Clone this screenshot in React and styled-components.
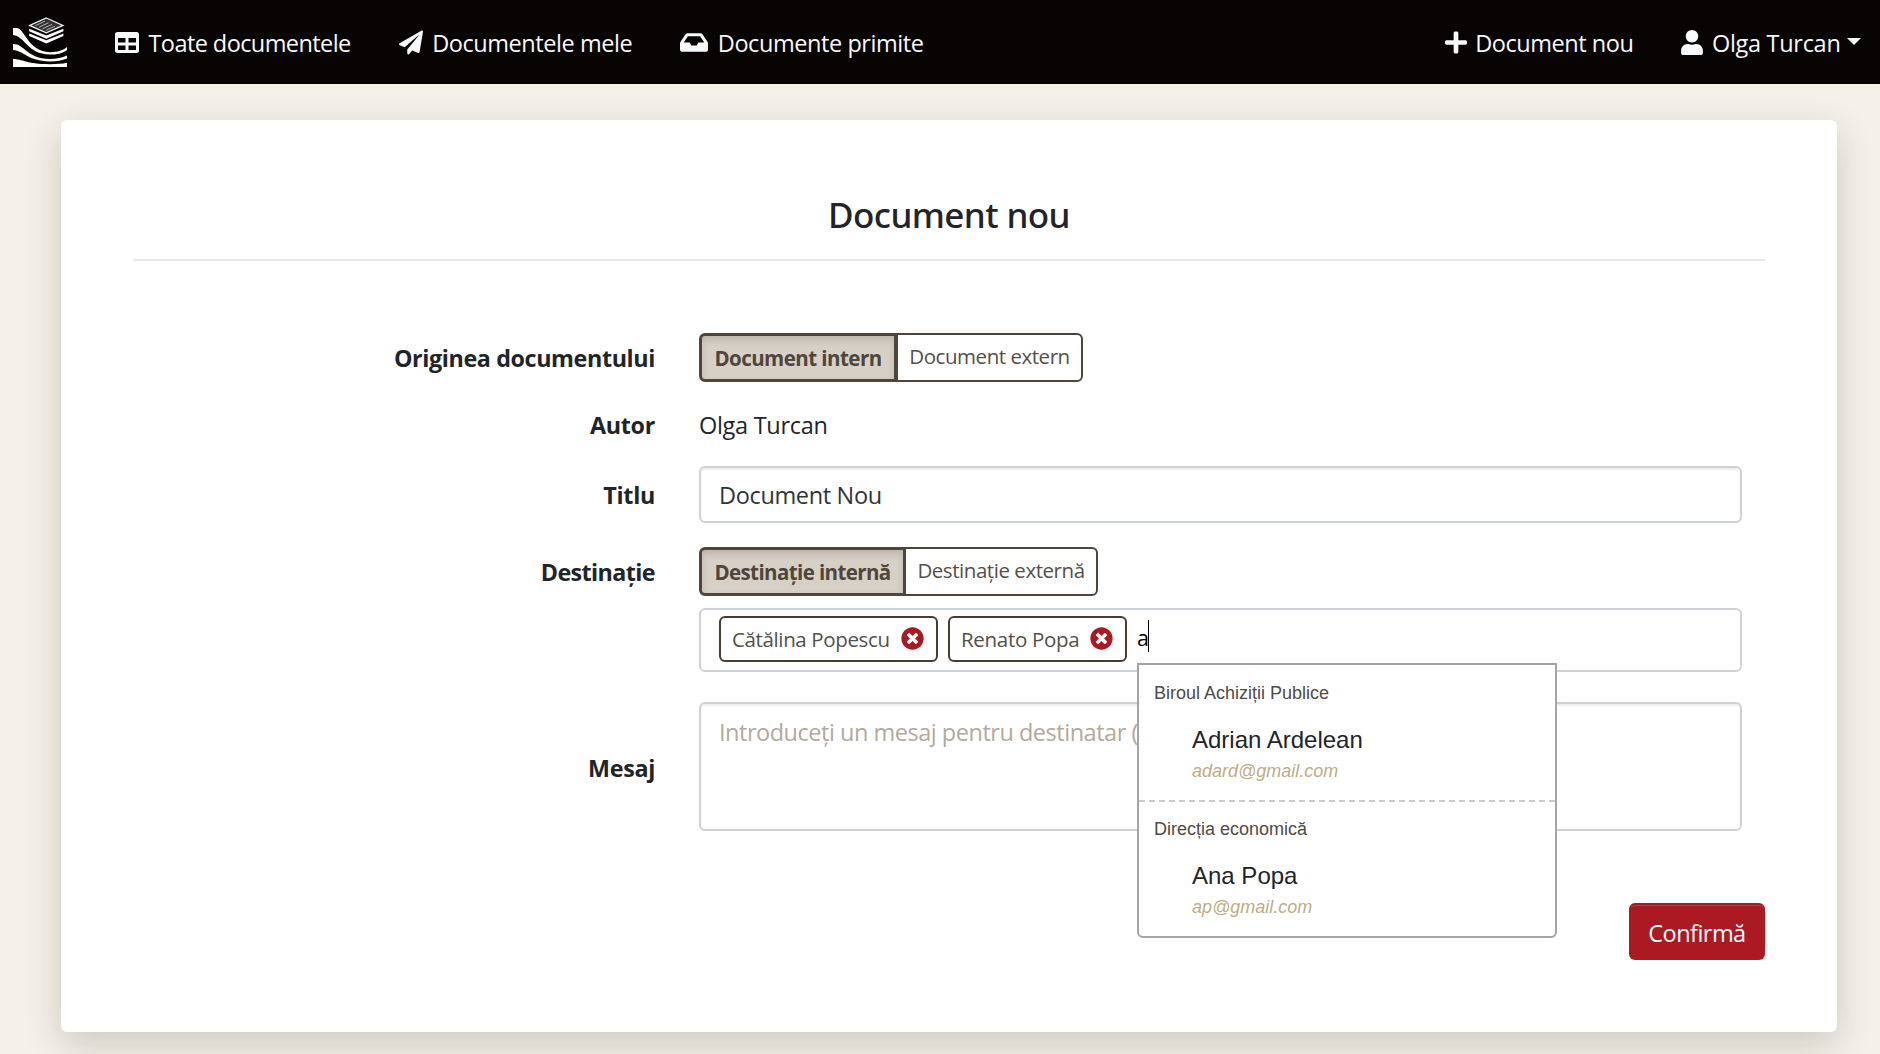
import React from 'react';
import styled, { createGlobalStyle } from 'styled-components';
import { FaTable, FaPaperPlane, FaInbox, FaPlus, FaUser, FaTimesCircle } from 'react-icons/fa';

const GlobalStyle = createGlobalStyle`
  *, *::before, *::after { box-sizing: border-box; }
  html, body { height: 100%; }
  body {
    margin: 0;
    overflow: hidden;
    background: #f5f0ea;
    color: #212529;
    font-family: "Open Sans", "Noto Sans", sans-serif;
    font-size: 23.5px;
    line-height: 36px;
  }
`;

const Text = styled.span`
  white-space: nowrap;
  letter-spacing: ${(p) => p.$track || 0}px;
`;

const Navbar = styled.nav`
  display: flex;
  align-items: center;
  height: 84px;
  padding: 0 19px 0 13px;
  background: #080404;
  color: #f8f9fa;
`;

const Brand = styled.svg`
  width: 54px;
  height: 50px;
  margin-right: 48px;
`;

const NavGroup = styled.div`
  display: flex;
  align-items: center;
  gap: 48px;
`;

const NavGroupEnd = styled(NavGroup)`
  margin-left: auto;
`;

const NavLink = styled.a`
  display: flex;
  align-items: center;
  gap: ${(p) => p.$gap || 9.5}px;
  padding-top: 2px;
  svg {
    width: ${(p) => p.$icon}px;
    height: 25px;
    margin-bottom: 2px;
    flex: none;
  }
`;

const Caret = styled.i`
  margin: -3px 0 0 -2px;
  border: 7px solid transparent;
  border-top-color: currentColor;
  border-bottom: 0;
`;

const Card = styled.main`
  margin: 36px 43px 0 61px;
  height: 912px;
  padding: 72px;
  background: #fff;
  border-radius: 6px;
  box-shadow: 0 12px 36px rgba(30, 30, 10, 0.19);
`;

const Title = styled.h1`
  margin: 0;
  padding: 1px 0 22px;
  border-bottom: 2px solid #e8e8e8;
  font: 500 35px/44px "Noto Sans", "Open Sans", sans-serif;
  letter-spacing: -0.6px;
  text-align: center;
`;

const Form = styled.form`
  display: flex;
  flex-direction: column;
  padding-top: 72px;
`;

const Row = styled.div`
  display: grid;
  grid-template-columns: 522px 1043px;
  column-gap: 44px;
  align-items: center;
  margin-bottom: ${(p) => p.$after}px;
`;

const Label = styled.label`
  font-size: 23.3px;
  font-weight: 700;
  text-align: right;
  padding-top: ${(p) => p.$drop || 1}px;
`;

const FieldColumn = styled.div`
  grid-column: 2;
  min-width: 0;
`;

const Toggle = styled.div`
  display: flex;
  height: 49px;
  font-size: 20.5px;
`;

const Option = styled.button`
  display: flex;
  align-items: center;
  justify-content: center;
  width: ${(p) => p.$width}px;
  padding: 0 0 3px;
  border: 2px solid #50453b;
  border-radius: 0 6px 6px 0;
  margin-left: ${(p) => p.$overlap || 0}px;
  background: #fff;
  color: #555049;
  font: inherit;
`;

const ActiveOption = styled(Option)`
  padding: 1px 0 0;
  border-width: 3px;
  border-radius: 6px 0 0 6px;
  background: #d7d0c6;
  box-shadow: inset 0 4px 7px rgba(0, 0, 0, 0.13);
  color: #50453b;
  font-weight: 700;
`;

const Box = styled.div`
  display: flex;
  align-items: center;
  height: ${(p) => p.$height}px;
  padding: 0 18px;
  border: 2px solid #ced2d8;
  border-radius: 6px;
  background: #fff;
  color: #30353a;
`;

const InsetBox = styled(Box)`
  box-shadow: inset 0 2px 2px rgba(0, 0, 0, 0.07);
`;

const MessageBox = styled(InsetBox)`
  align-items: flex-start;
  padding-top: 10px;
  color: #b3a99d;
`;

const Chip = styled.span`
  display: flex;
  align-items: center;
  justify-content: space-between;
  width: ${(p) => p.$width}px;
  height: 46px;
  margin: 0 10px 2px 0;
  padding: 0 12px 0 11px;
  border: 2px solid #453e36;
  border-radius: 6px;
  color: #555049;
  font-size: 20.5px;
  svg {
    width: 23px;
    height: 23px;
    color: #ab1a22;
    margin-bottom: 1px;
  }
`;

const Typed = styled.span`
  position: relative;
  display: flex;
  align-items: center;
  height: 32px;
  margin: 0 0 8px;
  padding-top: 3px;
  border-right: 1px solid #000;
  color: #000;
  font-size: 21.5px;
  letter-spacing: -0.5px;
`;

const Suggestions = styled.div`
  position: absolute;
  z-index: 2;
  top: 43px;
  left: 0;
  width: 420px;
  border: 2px solid #a5a5a5;
  border-radius: 0 0 6px 6px;
  background: #fff;
  font-family: "Liberation Sans", Arial, sans-serif;
  letter-spacing: 0;
`;

const Group = styled.section`
  padding: 14px 15px 16px;
  & + & {
    padding-top: 13px;
    border-top: 2px dashed #cbcbcb;
  }
`;

const GroupName = styled.div`
  margin-bottom: 15px;
  color: #4f4a45;
  font-size: 18px;
  line-height: 28px;
`;

const Person = styled.div`
  padding-left: 38px;
  color: #212529;
  font-size: 24px;
  line-height: 36px;
`;

const Email = styled.div`
  color: #bfab84;
  font-size: 18px;
  font-style: italic;
  line-height: 26px;
`;

const Submit = styled.button`
  align-self: flex-end;
  width: 136px;
  height: 57px;
  padding: 3px 0 0;
  border: 2px solid #ab1a22;
  border-top-color: #9a2029;
  border-radius: 6px;
  background: #ab1a22;
  box-shadow: inset 0 1px 0 rgba(255, 255, 255, 0.15);
  color: #fff;
  font: inherit;
`;

const Logo = () => (
  <Brand viewBox="0 0 54 50" fill="#fff">
    <path d="M33.3 1 50 8.4 33.3 15.8 16.6 8.4z" fill="#333" stroke="#eee" strokeWidth="1.3" />
    <path d="M22.5 8.6 32 4.2M26 10.2l9.5-4.4M29.5 11.8l9.5-4.4M33 13.3l9-4.1" stroke="#bbb" strokeWidth="0.9" />
    <path d="M16.2 11.8l17.1 6.6 17.1-6.6v2.4l-17.1 7.5L16.2 14.2z" />
    <path d="M16.2 16.6l17.1 6.6 17.1-6.6v2.4l-17.1 7.5-17.1-7.5z" />
    <path d="M0 11h4C12 12 15 34.7 37 35.2c8 0 13-2 17-5.2v3.2c-5 3.2-10 4.4-17 4.4C14 37 12 19 0 18z" />
    <path d="M0 27c12 0 13 14.5 37 15 7 0 12-1 17-3.4v3c-5 2-10 2.8-17 2.8C14 44 12 34 0 33z" />
    <path d="M0 42c10 0 12 5 37 5.2 7 0 12-.4 17-1.4V50H0z" />
  </Brand>
);

const links = [
  { icon: FaTable, size: 24, text: 'Toate documentele', track: -0.58 },
  { icon: FaPaperPlane, size: 24, text: 'Documentele mele', track: -0.44 },
  { icon: FaInbox, size: 28, text: 'Documente primite', track: -0.43 },
];

const groups = [
  { name: 'Biroul Achiziții Publice', person: 'Adrian Ardelean', email: 'adard@gmail.com' },
  { name: 'Direcția economică', person: 'Ana Popa', email: 'ap@gmail.com' },
];

export default function App() {
  return (
    <>
      <GlobalStyle />
      <Navbar>
        <Logo />
        <NavGroup>
          {links.map(({ icon: Icon, size, text, track }) => (
            <NavLink key={text} $icon={size}>
              <Icon />
              <Text $track={track}>{text}</Text>
            </NavLink>
          ))}
        </NavGroup>
        <NavGroupEnd>
          <NavLink $icon={22} $gap={8.5}>
            <FaPlus />
            <Text $track={-0.45}>Document nou</Text>
          </NavLink>
          <NavLink $icon={22} $gap={8.5}>
            <FaUser />
            <Text $track={-0.3}>Olga Turcan</Text>
            <Caret />
          </NavLink>
        </NavGroupEnd>
      </Navbar>

      <Card>
        <Title>Document nou</Title>
        <Form>
          <Row $after={24}>
            <Label><Text $track={-0.38}>Originea documentului</Text></Label>
            <Toggle>
              <ActiveOption type="button" $width={198}><Text $track={-0.54}>Document intern</Text></ActiveOption>
              <Option type="button" $width={187} $overlap={-1}><Text $track={-0.46}>Document extern</Text></Option>
            </Toggle>
          </Row>
          <Row $after={23}>
            <Label><Text $track={-0.3}>Autor</Text></Label>
            <Text $track={-0.3}>Olga Turcan</Text>
          </Row>
          <Row $after={24}>
            <Label><Text $track={-0.3}>Titlu</Text></Label>
            <InsetBox $height={57}><Text $track={-0.35}>Document Nou</Text></InsetBox>
          </Row>
          <Row $after={12}>
            <Label><Text $track={-0.6}>Destinație</Text></Label>
            <Toggle>
              <ActiveOption type="button" $width={207}><Text $track={-0.6}>Destinație internă</Text></ActiveOption>
              <Option type="button" $width={194} $overlap={-2}><Text $track={-0.45}>Destinație externă</Text></Option>
            </Toggle>
          </Row>
          <Row $after={30}>
            <FieldColumn>
              <Box $height={64}>
                <Chip $width={219}><Text $track={-0.37}>Cătălina Popescu</Text><FaTimesCircle /></Chip>
                <Chip $width={179}><Text $track={-0.3}>Renato Popa</Text><FaTimesCircle /></Chip>
                <Typed>
                  a
                  <Suggestions>
                    {groups.map((g) => (
                      <Group key={g.name}>
                        <GroupName>{g.name}</GroupName>
                        <Person>
                          {g.person}
                          <Email>{g.email}</Email>
                        </Person>
                      </Group>
                    ))}
                  </Suggestions>
                </Typed>
              </Box>
            </FieldColumn>
          </Row>
          <Row $after={72}>
            <Label $drop={3}><Text $track={-0.3}>Mesaj</Text></Label>
            <MessageBox $height={129}><Text $track={-0.48}>Introduceți un mesaj pentru destinatar (</Text></MessageBox>
          </Row>
          <Submit type="button"><Text $track={-0.54}>Confirmă</Text></Submit>
        </Form>
      </Card>
    </>
  );
}
